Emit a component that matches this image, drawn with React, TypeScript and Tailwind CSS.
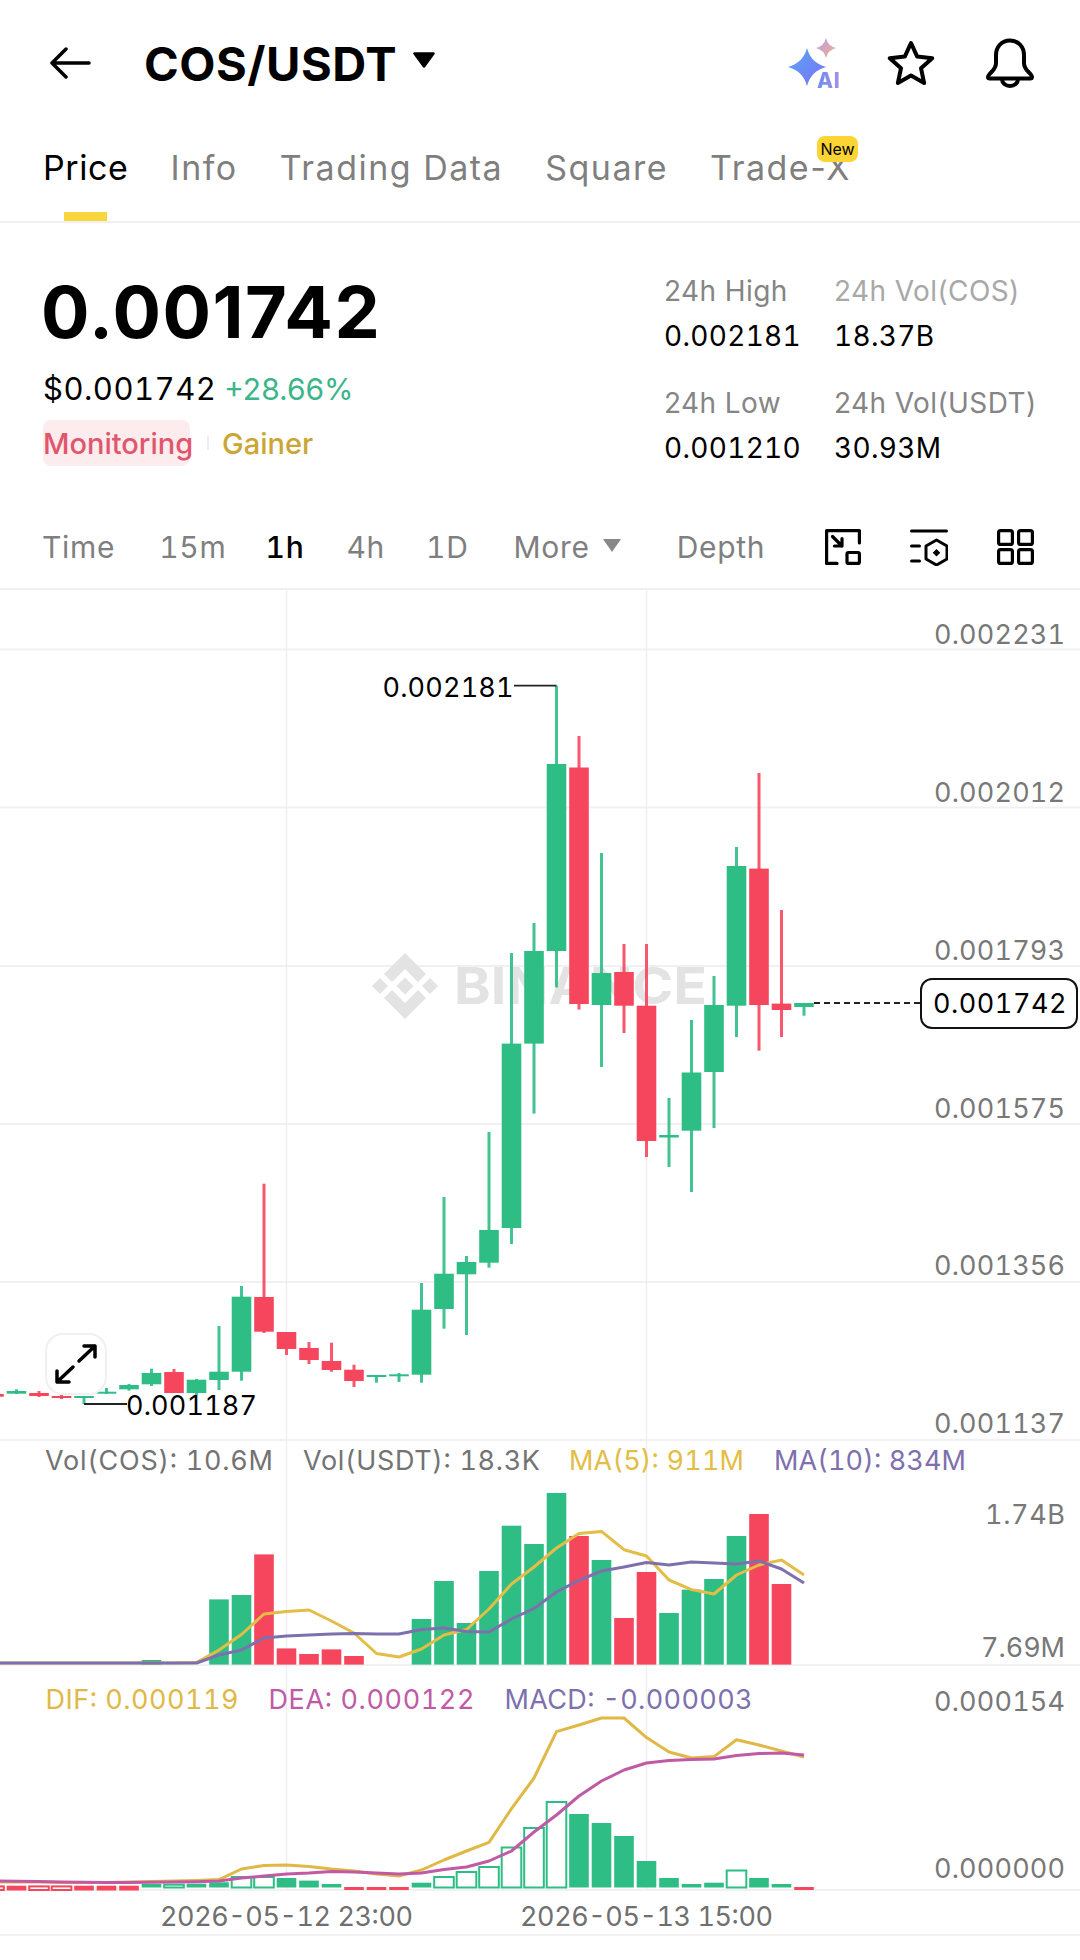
const GREEN = "#2EBD85";
const RED = "#F6465D";

// x position of the nth candle on the chart
const candleX = (i: number) => -6 + 22.5 * i;

// [color, high, bodyTop, bodyBottom, low] in chart pixels
const candles: [string, number, number, number, number][] = [
  [RED, 1393, 1394, 1396.7, 1397],
  [GREEN, 1389.3, 1391, 1393.7, 1394],
  [RED, 1391, 1393, 1396, 1397],
  [RED, 1395, 1396, 1397.7, 1399],
  [GREEN, 1396, 1396, 1398, 1404],
  [GREEN, 1388, 1391.7, 1393.7, 1394],
  [GREEN, 1384, 1385, 1389.3, 1390.7],
  [GREEN, 1368.7, 1373, 1384.3, 1386],
  [RED, 1369, 1372, 1393, 1393],
  [GREEN, 1379, 1379.7, 1393, 1395],
  [GREEN, 1326, 1371.7, 1380, 1390],
  [GREEN, 1286, 1296.7, 1371.7, 1380.7],
  [RED, 1183.7, 1297, 1331.7, 1333],
  [RED, 1332, 1332, 1349, 1355],
  [RED, 1342, 1348, 1360, 1364],
  [RED, 1342.7, 1361, 1370, 1371.7],
  [RED, 1364.7, 1369.7, 1381, 1387],
  [GREEN, 1375, 1375, 1377, 1382.7],
  [GREEN, 1373, 1374.3, 1376.3, 1382],
  [GREEN, 1283, 1309.7, 1374.7, 1382.7],
  [GREEN, 1197, 1273.7, 1309, 1328.7],
  [GREEN, 1256, 1262, 1274.3, 1335],
  [GREEN, 1132, 1230, 1262.7, 1267.7],
  [GREEN, 953, 1043.6, 1228, 1244],
  [GREEN, 923, 951, 1043.6, 1113.6],
  [GREEN, 685.7, 764, 951, 987.5],
  [RED, 736, 767.5, 1004, 1009.6],
  [GREEN, 853, 973, 1005, 1067],
  [RED, 944, 972, 1005.7, 1033],
  [RED, 944, 1005.7, 1141, 1157],
  [GREEN, 1098, 1135, 1137.5, 1167],
  [GREEN, 1020, 1072.5, 1130.7, 1192],
  [GREEN, 976, 1005, 1072, 1128],
  [GREEN, 847, 866, 1005.7, 1037],
  [RED, 773, 868.6, 1005, 1050.7],
  [RED, 910, 1003.6, 1010, 1037],
  [GREEN, 1003, 1003, 1007, 1015.7],
];

// [candle index, color, top]
const volumes: [number, string, number][] = [
  [7, GREEN, 1660],
  [10, GREEN, 1599.4],
  [11, GREEN, 1595],
  [12, RED, 1554.4],
  [13, RED, 1648.4],
  [14, RED, 1654],
  [15, RED, 1649.4],
  [16, RED, 1656],
  [19, GREEN, 1619],
  [20, GREEN, 1581],
  [21, GREEN, 1623],
  [22, GREEN, 1571],
  [23, GREEN, 1525.7],
  [24, GREEN, 1544],
  [25, GREEN, 1493],
  [26, RED, 1536],
  [27, GREEN, 1560],
  [28, RED, 1618],
  [29, RED, 1572],
  [30, GREEN, 1613],
  [31, GREEN, 1589.6],
  [32, GREEN, 1579],
  [33, GREEN, 1536],
  [34, RED, 1514],
  [35, RED, 1584],
];

const ma5 = [
  1663, 1663, 1663, 1663, 1663, 1663, 1663, 1663, 1663, 1662.6, 1650, 1634.5, 1614, 1611.5, 1610, 1621, 1633, 1653.5,
  1657, 1649, 1635, 1629.5, 1609, 1584, 1567, 1548, 1533.5, 1531.4, 1549.7, 1556, 1580, 1589.6, 1594, 1575, 1565, 1560,
  1575,
];
const ma10 = [
  1663, 1663, 1663, 1663, 1663, 1663, 1663, 1663, 1663, 1663, 1655, 1650, 1638, 1636, 1635, 1634, 1633.5, 1634, 1634,
  1629.5, 1628, 1631.5, 1632, 1619, 1608.5, 1592, 1580.4, 1571, 1567, 1562.5, 1565, 1562, 1563, 1564, 1561, 1569, 1583,
];
const dif = [
  1882, 1882, 1882, 1882.5, 1882.5, 1882.5, 1882, 1881.5, 1881, 1880.5, 1879.6, 1869, 1865.4, 1865, 1866.4, 1869, 1871,
  1874, 1876, 1870, 1860, 1851, 1842.4, 1808.6, 1778, 1731.6, 1725, 1718, 1718, 1737.6, 1752, 1758, 1756.6, 1739.7,
  1745, 1751, 1757,
];
const dea = [
  1881, 1881.3, 1881.6, 1882, 1882.2, 1882.4, 1882.5, 1882.3, 1882, 1881.7, 1881, 1878, 1876, 1874, 1873, 1871.5, 1872,
  1873, 1874, 1873, 1869.5, 1867, 1861, 1851, 1832, 1815, 1796, 1781, 1770, 1763, 1760.6, 1759.6, 1759, 1755.6, 1753.5,
  1753, 1755,
];

// [candle index, color, top, bottom, hollow]
const macdBars: [number, string, number, number, boolean][] = [
  [0, RED, 1886.4, 1890, true],
  [1, RED, 1885.7, 1890.5, false],
  [2, RED, 1886.4, 1890, true],
  [3, RED, 1886.4, 1890, true],
  [4, RED, 1885.7, 1890.5, false],
  [5, RED, 1885.7, 1890.5, false],
  [6, RED, 1885.7, 1890.5, false],
  [7, GREEN, 1884, 1887.5, false],
  [8, GREEN, 1884.7, 1887.5, true],
  [9, GREEN, 1883.7, 1887.5, false],
  [10, GREEN, 1882.3, 1887.5, false],
  [11, GREEN, 1877, 1887.5, true],
  [12, GREEN, 1877, 1887.5, true],
  [13, GREEN, 1878, 1887.5, false],
  [14, GREEN, 1880.6, 1887.5, false],
  [15, GREEN, 1884, 1887.5, false],
  [16, RED, 1887, 1890, false],
  [17, RED, 1887, 1890, false],
  [18, RED, 1887, 1890, false],
  [19, GREEN, 1882.7, 1887.5, false],
  [20, GREEN, 1877, 1887.5, true],
  [21, GREEN, 1872, 1887.5, true],
  [22, GREEN, 1867, 1887.5, true],
  [23, GREEN, 1847.5, 1887.5, true],
  [24, GREEN, 1828, 1887.5, true],
  [25, GREEN, 1802, 1887.5, true],
  [26, GREEN, 1814, 1887.5, false],
  [27, GREEN, 1823, 1887.5, false],
  [28, GREEN, 1836, 1887.5, false],
  [29, GREEN, 1861, 1887.5, false],
  [30, GREEN, 1878, 1887.5, false],
  [31, GREEN, 1884, 1887.5, false],
  [32, GREEN, 1882.7, 1887.5, false],
  [33, GREEN, 1870.5, 1887.5, true],
  [34, GREEN, 1878, 1887.5, false],
  [35, GREEN, 1884, 1887.5, false],
  [36, RED, 1887, 1890, false],
];

const points = (values: number[]) => values.map((y, i) => `${candleX(i)},${y}`).join(" ");

const tabs = ["Info", "Trading Data", "Square"];

const BackIcon = () => (
  <svg width="42" height="32" viewBox="0 0 42 32" fill="none" stroke="#000" strokeWidth="3.5" strokeLinecap="round" strokeLinejoin="round">
    <path d="M40 16H3M17 2L3 16l14 14" />
  </svg>
);

const AiIcon = () => (
  <div className="relative w-[54px] h-[50px]">
    <svg width="54" height="50" viewBox="0 0 54 50">
      <defs>
        <linearGradient id="aiBig" x1="0" y1="0" x2="1" y2="1">
          <stop offset="0" stopColor="#5aa8f5" />
          <stop offset="1" stopColor="#7a6ff8" />
        </linearGradient>
        <linearGradient id="aiSmall" x1="0" y1="0" x2="1" y2="1">
          <stop offset="0" stopColor="#b79bea" />
          <stop offset="1" stopColor="#f5b08a" />
        </linearGradient>
      </defs>
      <path d="M20 10Q24 25 39 29Q24 33 20 48Q16 33 1 29Q16 25 20 10Z" fill="url(#aiBig)" />
      <path d="M39 0Q41 8 49 10Q41 12 39 20Q37 12 29 10Q37 8 39 0Z" fill="url(#aiSmall)" />
    </svg>
    <span className="absolute left-[30px] top-[33px] text-[21px] leading-[20px] font-extrabold tracking-[0.5px] bg-gradient-to-r from-[#6d8df2] to-[#a48ee8] bg-clip-text text-transparent">
      AI
    </span>
  </div>
);

const StarIcon = () => (
  <svg width="48" height="46" viewBox="0 0 48 46" fill="none" stroke="#000" strokeWidth="4" strokeLinejoin="round">
    <path d="M24 3l6.2 13.6 15 1.6-11.2 10 3.1 14.8L24 35.6 10.900 43l3.100-14.800-11.200-10 15-1.600z" />
  </svg>
);

const BellIcon = () => (
  <svg width="48" height="50" viewBox="0 0 48 50" fill="none" stroke="#000" strokeWidth="4" strokeLinejoin="round" strokeLinecap="round">
    <path d="M24 2.500c-8.500 0-14 6.500-14 14.500v8c0 3.500-1.500 6-4.500 9-2.500 2.500-3.500 4-3.500 5 0 .8.800 1.500 2 1.500h40c1.200 0 2-.7 2-1.500 0-1-1-2.500-3.500-5-3-3-4.500-5.500-4.500-9v-8c0-8-5.500-14.500-14-14.500z" />
    <path d="M16 41c0 4 3.500 7 8 7s8-3 8-7" />
  </svg>
);

const ResizeIcon = () => (
  <svg width="36" height="36" viewBox="0 0 36 36" fill="none" stroke="#000" strokeWidth="3.200" strokeLinejoin="round" strokeLinecap="round">
    <path d="M12 34.400H1.600V1.600h32.800V14" />
    <rect x="22" y="23.500" width="12.400" height="10.900" rx="1.500" />
    <path d="M7.500 7.500l9.500 9.500M17 9.500V17H9.500" />
  </svg>
);

const SettingIcon = () => (
  <svg width="38" height="38" viewBox="0 0 38 38" fill="none" stroke="#000" strokeWidth="3" strokeLinejoin="round" strokeLinecap="round">
    <path d="M1.500 3h35M1.500 18h8M1.500 33h8" />
    <path d="M26.500 12L37 18v13l-10.500 6L16 31V18z" />
    <path d="M26.500 21l3.800 3.800-3.800 3.800-3.800-3.800z" fill="#000" stroke="none" />
  </svg>
);

const GridIcon = () => (
  <svg width="37" height="36" viewBox="0 0 37 36" fill="none" stroke="#000" strokeWidth="3.200">
    <rect x="1.600" y="1.600" width="13.800" height="13.800" rx="2" />
    <rect x="21.600" y="1.600" width="13.800" height="13.800" rx="2" />
    <rect x="1.600" y="20.600" width="13.800" height="13.800" rx="2" />
    <rect x="21.600" y="20.600" width="13.800" height="13.800" rx="2" />
  </svg>
);

const Stat = ({ label, value, light }: { label: string; value: string; light?: boolean }) => (
  <div className="flex flex-col gap-[11px] text-[28px] leading-[34px]">
    <p className={`tracking-[0.4px] ${light ? "text-[#a8a8a8]" : "text-[#858585]"}`}>{label}</p>
    <p className="text-black tabular-nums tracking-[0.3px]">{value}</p>
  </div>
);

// Text stretched to the width it has in the picture
const ChartText = ({ x, y, w, className, children }: { x: number; y: number; w: number; className: string; children: string }) => (
  <text x={x} y={y} textLength={w} className={`tabular-nums ${className}`}>
    {children}
  </text>
);

const AxisLabel = ({ y, w = 131, children }: { y: number; w?: number; children: string }) => (
  <ChartText x={1065 - w} y={y} w={w} className="text-[27px] fill-[#787878]">
    {children}
  </ChartText>
);

const Chart = () => (
  <svg width="1080" height="1370" viewBox="0 590 1080 1370" className="block">
    {/* grid */}
    {[649.5, 807.5, 966, 1124, 1282, 1440, 1665, 1890, 1935].map((y) => (
      <line key={y} x1="0" x2="1080" y1={y} y2={y} stroke="#f1f1f1" strokeWidth="2" />
    ))}
    {[286.5, 646.5].map((x) => (
      <line key={x} x1={x} x2={x} y1="590" y2="1890" stroke="#efefef" strokeWidth="1.500" />
    ))}

    {/* watermark */}
    <g transform="translate(405 986)" fill="#e3e3e3">
      <path d="M0-33l21 21-8 8L0-17-13-4l-8-8z" />
      <path d="M0 33l21-21-8-8L0 17-13 4l-8 8z" />
      <path d="M-33 0l8-8 8 8-8 8zM33 0l-8-8-8 8 8 8zM0-8.500L8.500 0 0 8.500-8.500 0z" />
    </g>
    <text x="454" y="1004" textLength="253" lengthAdjust="spacingAndGlyphs" className="text-[51px] font-bold fill-[#e3e3e3]">
      BINANCE
    </text>

    {/* candles */}
    {candles.map(([color, high, top, bottom, low], i) => (
      <g key={i}>
        <rect x={candleX(i) - 1.5} y={high} width="3" height={low - high} fill={color} opacity="0.9" />
        <rect x={candleX(i) - 9.8} y={top} width="19.600" height={Math.max(bottom - top, 2)} fill={color} />
      </g>
    ))}

    {/* high / low markers */}
    <path d="M514 685.700H556.500" stroke="#222" strokeWidth="1.800" />
    <ChartText x={382.5} y={696.5} w={131} className="text-[27px] fill-black">0.002181</ChartText>
    <path d="M84 1404H127" stroke="#222" strokeWidth="1.800" />
    <ChartText x={126} y={1415} w={131} className="text-[27px] fill-black">0.001187</ChartText>
    <line x1="814" x2="920" y1="1003" y2="1003" stroke="#222" strokeWidth="1.800" strokeDasharray="6 4" />

    {/* price axis */}
    <AxisLabel y={644}>0.002231</AxisLabel>
    <AxisLabel y={802}>0.002012</AxisLabel>
    <AxisLabel y={959.5}>0.001793</AxisLabel>
    <AxisLabel y={1117.5}>0.001575</AxisLabel>
    <AxisLabel y={1275}>0.001356</AxisLabel>
    <AxisLabel y={1433}>0.001137</AxisLabel>

    {/* volume */}
    <ChartText x={45} y={1470} w={228} className="text-[27px] fill-[#737373]">Vol(COS): 10.6M</ChartText>
    <ChartText x={303} y={1470} w={237} className="text-[27px] fill-[#737373]">Vol(USDT): 18.3K</ChartText>
    <ChartText x={569} y={1470} w={175} className="text-[27px] fill-[#e3bd45]">MA(5): 911M</ChartText>
    <ChartText x={774} y={1470} w={192} className="text-[27px] fill-[#7e70ad]">MA(10): 834M</ChartText>
    {volumes.map(([i, color, top]) => (
      <rect key={i} x={candleX(i) - 9.8} y={top} width="19.600" height={1664.6 - top} fill={color} />
    ))}
    <polyline points={points(ma5)} fill="none" stroke="#e3bd45" strokeWidth="3" strokeLinejoin="round" />
    <polyline points={points(ma10)} fill="none" stroke="#7e70ad" strokeWidth="3" strokeLinejoin="round" />
    <AxisLabel y={1524} w={80}>1.74B</AxisLabel>
    <AxisLabel y={1657} w={84}>7.69M</AxisLabel>

    {/* macd */}
    <ChartText x={45.5} y={1709} w={193} className="text-[27px] fill-[#e0b846]">DIF: 0.000119</ChartText>
    <ChartText x={268.5} y={1709} w={206} className="text-[27px] fill-[#c15aa6]">DEA: 0.000122</ChartText>
    <ChartText x={504.5} y={1709} w={248} className="text-[27px] fill-[#7e70ad]">MACD: -0.000003</ChartText>
    {macdBars.map(([i, color, top, bottom, hollow]) =>
      hollow ? (
        <rect key={i} x={candleX(i) - 9.8} y={top} width="19.600" height={bottom - top} fill="#fff" stroke={color} strokeWidth="2" />
      ) : (
        <rect key={i} x={candleX(i) - 9.8} y={top} width="19.600" height={bottom - top} fill={color} />
      ),
    )}
    <polyline points={points(dif)} fill="none" stroke="#e0b846" strokeWidth="3" strokeLinejoin="round" />
    <polyline points={points(dea)} fill="none" stroke="#c15aa6" strokeWidth="3" strokeLinejoin="round" />
    <AxisLabel y={1710.5}>0.000154</AxisLabel>
    <AxisLabel y={1878}>0.000000</AxisLabel>

    {/* time axis */}
    <ChartText x={160} y={1926} w={253} className="text-[27px] fill-[#6f6f6f]">2026-05-12 23:00</ChartText>
    <ChartText x={520} y={1926} w={253} className="text-[27px] fill-[#6f6f6f]">2026-05-13 15:00</ChartText>
  </svg>
);

export default function App() {
  return (
    <div className="w-[1080px] h-[1960px] bg-white overflow-hidden font-['Inter',sans-serif]">
      {/* top bar */}
      <header className="flex items-center h-[126px] pl-[49px] pr-[46px]">
        <BackIcon />
        <h1 className="ml-[53px] mt-[2px] text-[47px] leading-[56px] font-bold text-black tracking-[0.5px]">COS/USDT</h1>
        <svg width="24" height="16" viewBox="0 0 24 16" className="ml-[15px] mb-[6px]">
          <path d="M2.500 1.500h19L12 14.500z" fill="#000" stroke="#000" strokeWidth="2.500" strokeLinejoin="round" />
        </svg>
        <div className="ml-auto flex items-center gap-[51px]">
          <div className="flex items-center gap-[46px]">
            <AiIcon />
            <StarIcon />
          </div>
          <BellIcon />
        </div>
      </header>

      {/* tabs */}
      <nav className="flex items-start gap-[42px] h-[97px] pl-[43px] pt-[22px] border-b-2 border-[#f0f0f0] text-[34px] leading-[40px] tracking-[1.5px] text-[#7f7f7f]">
        <div className="relative text-black tracking-[0.6px]">
          Price
          <span className="absolute left-[21px] top-[64px] w-[43px] h-[9px] bg-[#f9d63e]" />
        </div>
        {tabs.map((tab) => (
          <span key={tab}>{tab}</span>
        ))}
        <div className="relative">
          Trade-X
          <span className="absolute left-[107px] top-[-12px] w-[41px] h-[26px] rounded-[8px] bg-[#fcd535] text-[16px] leading-[26px] tracking-normal text-center text-black">
            New
          </span>
        </div>
      </nav>

      {/* price summary */}
      <section className="flex h-[282px] pl-[43px]">
        <div className="flex flex-col w-[621px] pt-[53px]">
          <p className="-ml-[2px] text-[72px] leading-[72px] font-bold text-black tracking-[1.5px]">0.001742</p>
          <p className="mt-[23px] flex text-[31px] leading-[36px]">
            <span className="w-[181px] text-black tabular-nums tracking-[0.5px]">$0.001742</span>
            <span className="text-[30px] text-[#3cb58a]">+28.66%</span>
          </p>
          <div className="mt-[13px] flex items-center text-[29px] leading-[48px] font-medium">
            <span className="w-[147px] h-[46px] rounded-[8px] bg-[#fdecee] text-[#e0566c] whitespace-nowrap">Monitoring</span>
            <span className="ml-[17px] w-[2px] h-[14px] bg-[#eeeeee]" />
            <span className="ml-[13px] h-[46px] text-[#c9a635]">Gainer</span>
          </div>
        </div>
        <div className="grid grid-cols-[170px_auto] gap-y-[33px] pt-[51px] h-fit">
          <Stat label="24h High" value="0.002181" />
          <Stat label="24h Vol(COS)" value="18.37B" light />
          <Stat label="24h Low" value="0.001210" />
          <Stat label="24h Vol(USDT)" value="30.93M" />
        </div>
      </section>

      {/* interval row */}
      <div className="flex items-center h-[85px] pl-[42px] pr-[46px] border-b-2 border-[#f0f0f0] text-[30px] leading-[36px] tracking-[0.7px] tabular-nums text-[#7f7f7f]">
        <span>Time</span>
        <span className="ml-[44px]">15m</span>
        <span className="ml-[39px] font-medium text-black">1h</span>
        <span className="ml-[42px]">4h</span>
        <span className="ml-[41px]">1D</span>
        <span className="ml-[45px]">More</span>
        <svg width="20" height="14" viewBox="0 0 20 14" className="ml-[12px] mb-[4px]">
          <path d="M1 1h18l-9 13z" fill="#888" />
        </svg>
        <span className="ml-[55px]">Depth</span>
        <div className="ml-auto flex items-center gap-[49px]">
          <ResizeIcon />
          <SettingIcon />
          <GridIcon />
        </div>
      </div>

      {/* chart */}
      <div className="relative">
        <Chart />
        <button
          type="button"
          className="absolute left-[45px] top-[743px] flex items-center justify-center w-[62px] h-[62px] rounded-[18px] border-2 border-[#f0f0f0] bg-white/90"
        >
          <svg width="44" height="42" viewBox="0 0 44 42" fill="none" stroke="#000" strokeWidth="3.500" strokeLinecap="round" strokeLinejoin="round">
            <path d="M3 39l16-15M3 28v11h12" />
            <path d="M25 18L41 3M30 3h11v11" />
          </svg>
        </button>
        <div className="absolute left-[920px] top-[388px] w-[158px] h-[51px] pl-[2px] rounded-[12px] border-2 border-[#111] bg-white text-[27px] leading-[47px] text-center text-black tabular-nums tracking-[0.5px]">
          0.001742
        </div>
      </div>
    </div>
  );
}
